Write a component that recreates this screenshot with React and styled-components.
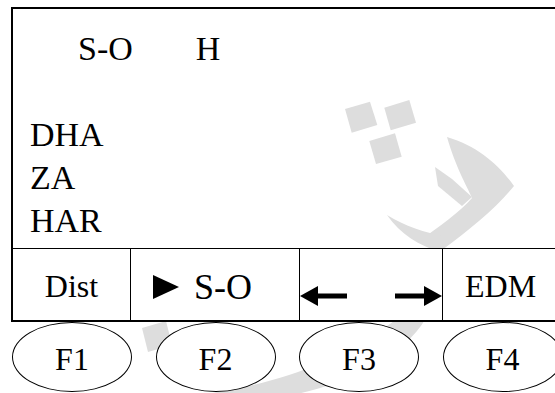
import React from "react";
import styled, { createGlobalStyle } from "styled-components";

const GlobalStyle = createGlobalStyle`
  html, body {
    margin: 0;
    padding: 0;
    background: #fff;
    overflow: hidden;
    color: #000;
  }
  body {
    font-family: "Liberation Serif", "Times New Roman", serif;
  }
`;

const Page = styled.div`
  position: relative;
  width: 555px;
  height: 393px;
  overflow: hidden;
`;

const Watermark = styled.svg`
  position: absolute;
  top: 0;
  left: 0;
  z-index: 0;
  pointer-events: none;
`;

const Screen = styled.div`
  position: relative;
  z-index: 1;
  margin: 7px 0 0 11px;
  border-top: 2px solid #000;
  border-left: 2px solid #000;
`;

const Display = styled.div`
  height: 239px;
  box-sizing: border-box;
  padding: 18px 0 0 17px;
  font-size: 34px;
  line-height: 43px;
`;

const Header = styled.div`
  display: flex;
  padding-left: 48px;
  gap: 63px;
`;

const List = styled.div`
  margin-top: 43px;
  display: flex;
  flex-direction: column;
`;

const SoftKeys = styled.div`
  display: grid;
  grid-template-columns: 118px 169px 143px 1fr;
  height: 74px;
  box-sizing: border-box;
  border-top: 1px solid #000;
  border-bottom: 2px solid #000;
`;

const Cell = styled.div`
  display: flex;
  align-items: center;
  justify-content: ${(p) => p.$justify || "center"};
  box-sizing: border-box;
  background: #fff;
  border-right: ${(p) => (p.$last ? "none" : "1px solid #000")};
  padding: ${(p) => p.$pad || "4px 0 0 0"};
  font-size: ${(p) => p.$size || 32}px;
  white-space: nowrap;
`;

const Keys = styled.div`
  position: relative;
  z-index: 1;
  display: flex;
  gap: 23.5px;
  padding-left: 12px;
`;

const Key = styled.div`
  flex: 0 0 auto;
  width: 120px;
  height: 70px;
  box-sizing: border-box;
  border: 1px solid #000;
  border-radius: 50%;
  background: #fff;
  display: flex;
  align-items: center;
  justify-content: center;
  padding-top: 5px;
  font-size: 32px;
`;

const Play = () => (
  <svg width="26" height="24" viewBox="0 0 26 24" style={{ marginRight: 15 }}>
    <polygon points="0,0 26,12 0,24" fill="#000" />
  </svg>
);

const Arrow = ({ right }) => (
  <svg width="47" height="20" viewBox="0 0 47 20">
    <g transform={right ? "translate(47,0) scale(-1,1)" : undefined}>
      <polygon points="0,10 18,0 18,20" fill="#000" />
      <rect x="17" y="7.5" width="30" height="5" fill="#000" />
    </g>
  </svg>
);

export default function App() {
  return (
    <Page>
      <GlobalStyle />
      <Watermark width="555" height="393" viewBox="0 0 555 393">
        <g fill="#dddddd">
          <polygon points="345,109 370,101.7 377.3,125 351.7,132.7" />
          <polygon points="384.3,107.7 409.3,100 416,122.7 390.7,130.3" />
          <polygon points="369.3,141 395,133.3 401.7,156.7 376,164" />
          <path d="M447 137 C478 146 500 166 514 186 C496 208 472 228 442 250 L418 242 C440 226 460 212 472 198 C466 184 456 168 447 137 Z" />
          <path d="M435 167 L452 179 L472 197 L462 206 L438 186 Z" />
          <path d="M387 215 C405 226 425 233 445 236 L440 252 C420 246 400 234 387 215 Z" />
          <path d="M398 318 L426 318 C402 360 342 385 292 395 L200 395 C260 386 330 370 398 318 Z" />
          <polygon points="142,328 166,321 172,345 148,352" />
        </g>
      </Watermark>
      <Screen>
        <Display>
          <Header>
            <span>S-O</span>
            <span>H</span>
          </Header>
          <List>
            <span>DHA</span>
            <span>ZA</span>
            <span>HAR</span>
          </List>
        </Display>
        <SoftKeys>
          <Cell>Dist</Cell>
          <Cell $justify="flex-start" $pad="4px 0 0 22px" $size={36}>
            <Play />
            S-O
          </Cell>
          <Cell $justify="space-between" $pad="23px 0 0 0">
            <Arrow />
            <Arrow right />
          </Cell>
          <Cell $last $pad="4px 0 0 22px" $justify="flex-start">
            EDM
          </Cell>
        </SoftKeys>
      </Screen>
      <Keys>
        <Key>F1</Key>
        <Key>F2</Key>
        <Key>F3</Key>
        <Key>F4</Key>
      </Keys>
    </Page>
  );
}
